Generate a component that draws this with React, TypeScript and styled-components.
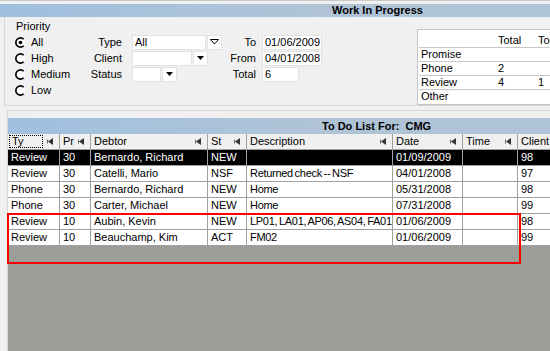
import styled, { createGlobalStyle } from "styled-components";

const GlobalStyle = createGlobalStyle`
  html, body {
    margin: 0;
    padding: 0;
    background: #f0f0f0;
    overflow: hidden;
  }
  body {
    font-family: "Liberation Sans", Arial, sans-serif;
    font-size: 11px;
    color: #000;
  }
`;

const Screen = styled.div`
  position: relative;
  width: 550px;
  height: 351px;
  overflow: hidden;
  display: flex;
  flex-direction: column;
  box-sizing: border-box;
  border-top: 1px solid #c8c8c8;
  padding-top: 3px;
`;

const TitleBar = styled.div<{ $height: number; $indent: number }>`
  flex-shrink: 0;
  height: ${(p) => p.$height}px;
  line-height: ${(p) => p.$height}px;
  padding-left: ${(p) => p.$indent}px;
  background: linear-gradient(90deg, #9ebfdf 0%, #a8c2dc 26%, #b0c3d6 60%, #aec3d8 100%);
  font-weight: bold;
  white-space: pre;
`;

/* ---------- filter panel ---------- */

const FilterPanel = styled.div`
  flex-shrink: 0;
  display: flex;
  align-items: flex-start;
  height: 89px;
  box-sizing: border-box;
  margin-left: 4px;
  padding-top: 3px;
  border-left: 1px solid #d6d6d6;
  border-bottom: 1px solid #d6d6d6;
`;

const PriorityGroup = styled.div`
  width: 80px;
  flex-shrink: 0;
  box-sizing: border-box;
  padding-left: 10px;
`;

const GroupLabel = styled.div`
  height: 14px;
  line-height: 13px;
  padding-left: 1px;
`;

const RadioRow = styled.div`
  display: flex;
  align-items: center;
  gap: 5px;
  height: 16px;
`;

const FieldsGroup = styled.div<{ $labelWidth: number; $fieldWidth: number; $gap: number }>`
  flex-shrink: 0;
  display: grid;
  grid-template-columns: ${(p) => p.$labelWidth}px ${(p) => p.$fieldWidth}px;
  grid-auto-rows: 16px;
  column-gap: ${(p) => p.$gap}px;
  align-items: center;
  margin-top: 14px;
`;

const FieldLabel = styled.div`
  text-align: right;
  line-height: 15px;
`;

const Combo = styled.div`
  display: flex;
  gap: 1px;
  height: 15px;
`;

const InputBox = styled.div<{ $width: number }>`
  width: ${(p) => p.$width}px;
  height: 15px;
  box-sizing: border-box;
  background: #fff;
  border: 1px solid #e2e2e2;
  padding-left: 2px;
  line-height: 13px;
  white-space: nowrap;
  overflow: hidden;
`;

const ComboButton = styled.div`
  width: 15px;
  height: 15px;
  box-sizing: border-box;
  background: #fff;
  border: 1px solid #e2e2e2;
  display: flex;
  align-items: center;
  justify-content: center;
`;

const DatesGroup = styled(FieldsGroup)`
  margin-left: 8px;
`;

const Summary = styled.div`
  flex-shrink: 0;
  width: 160px;
  margin-left: 95px;
  margin-top: 9px;
  padding: 1px;
  background: #fff;
  border: 1px solid #c4c4c4;
`;

const SummaryRow = styled.div<{ $head?: boolean }>`
  display: grid;
  grid-template-columns: 77px 40px 60px;
  height: ${(p) => (p.$head ? 16 : 14)}px;
  line-height: 13px;
  box-sizing: border-box;
  border-top: ${(p) => (p.$head ? "none" : "1px solid #c8c8c8")};
  padding-top: ${(p) => (p.$head ? 3 : 0)}px;

  & > span {
    padding-left: 2px;
    white-space: nowrap;
  }
`;

/* ---------- to do list ---------- */

const ListWindow = styled.div`
  flex: 1;
  display: flex;
  flex-direction: column;
  margin-top: 4px;
  margin-left: 7px;
  padding-top: 7px;
  border-left: 1px solid #d8d8d8;
  border-top: 1px solid #d8d8d8;
`;

const COLS = "52px 31px 117px 39px 146px 70px 55px 60px";

const GridRow = styled.div<{ $selected?: boolean }>`
  flex-shrink: 0;
  display: grid;
  grid-template-columns: ${COLS};
  height: 16px;
  background: ${(p) => (p.$selected ? "#000" : "#fff")};
  color: ${(p) => (p.$selected ? "#fff" : "#000")};
`;

const Cell = styled.div<{ $tight?: boolean }>`
  box-sizing: border-box;
  border-right: 1px solid #a0a0a0;
  border-bottom: 1px solid #a0a0a0;
  padding-left: 3px;
  line-height: 15px;
  white-space: nowrap;
  overflow: hidden;
  letter-spacing: ${(p) => (p.$tight ? "-0.3px" : "normal")};
  word-spacing: ${(p) => (p.$tight ? "-1px" : "normal")};
`;

const HeaderCell = styled(Cell)<{ $first?: boolean }>`
  display: flex;
  align-items: center;
  justify-content: space-between;
  padding-left: ${(p) => (p.$first ? 1 : 3)}px;
  padding-right: 6px;
  background: #f0f0f0;
`;

const FocusLabel = styled.span`
  width: 34px;
  height: 13px;
  box-sizing: border-box;
  border: 1px dotted #000;
  padding-left: 2px;
  line-height: 11px;
`;

const GrayFill = styled.div`
  flex: 1;
  background: #9c9e9a;
`;

const Highlight = styled.div`
  position: absolute;
  left: 7px;
  top: 212px;
  width: 514px;
  height: 51px;
  box-sizing: border-box;
  border: 2px solid #ff0000;
  pointer-events: none;
`;

/* ---------- drawings ---------- */

function Radio({ checked }: { checked?: boolean }) {
  return (
    <svg width="11" height="11" viewBox="0 0 12 12">
      <circle cx="6" cy="6" r="5" fill="#fff" />
      <path d="M9.5 2.5 A5 5 0 1 0 9.5 9.5" fill="none" stroke="#000" strokeWidth="1.8" />
      {checked && <circle cx="6" cy="6" r="2" fill="#000" />}
    </svg>
  );
}

function DropArrow({ hollow }: { hollow?: boolean }) {
  return hollow ? (
    <svg width="9" height="6" viewBox="0 0 9 6">
      <polygon points="0.5,0.5 8.5,0.5 4.5,5" fill="none" stroke="#000" strokeWidth="1" />
    </svg>
  ) : (
    <svg width="7" height="4" viewBox="0 0 7 4">
      <polygon points="0,0 7,0 3.5,4" fill="#000" />
    </svg>
  );
}

function SortArrow() {
  return (
    <svg width="6" height="7" viewBox="0 0 6 7">
      <polygon points="6,0 6,7 1,3.5" fill="#333" />
      <line x1="0.5" y1="1.5" x2="0.5" y2="5.5" stroke="#666" />
    </svg>
  );
}

/* ---------- data ---------- */

const priorities = [
  { label: "All", checked: true },
  { label: "High" },
  { label: "Medium" },
  { label: "Low" },
];

const summary = [
  ["Promise", "", ""],
  ["Phone", "2", ""],
  ["Review", "4", "1"],
  ["Other", "", ""],
];

const headers = ["Pr", "Debtor", "St", "Description", "Date", "Time", "Client"];

const tasks = [
  ["Review", "30", "Bernardo, Richard", "NEW", "", "01/09/2009", "", "98"],
  ["Review", "30", "Catelli, Mario", "NSF", "Returned check -- NSF", "04/01/2008", "", "97"],
  ["Phone", "30", "Bernardo, Richard", "NEW", "Home", "05/31/2008", "", "98"],
  ["Phone", "30", "Carter, Michael", "NEW", "Home", "07/31/2008", "", "99"],
  ["Review", "10", "Aubin, Kevin", "NEW", "LP01, LA01, AP06, AS04, FA01", "01/06/2009", "", "98"],
  ["Review", "10", "Beauchamp, Kim", "ACT", "FM02", "01/06/2009", "", "99"],
];

const DESCRIPTION = 4;

export default function App() {
  return (
    <>
      <GlobalStyle />
      <Screen>
        <TitleBar $height={13} $indent={332}>Work In Progress</TitleBar>

        <FilterPanel>
          <PriorityGroup>
            <GroupLabel>Priority</GroupLabel>
            {priorities.map((p) => (
              <RadioRow key={p.label}>
                <Radio checked={p.checked} />
                {p.label}
              </RadioRow>
            ))}
          </PriorityGroup>

          <FieldsGroup $labelWidth={37} $fieldWidth={90} $gap={10}>
            <FieldLabel>Type</FieldLabel>
            <Combo>
              <InputBox $width={75}>All</InputBox>
              <ComboButton>
                <DropArrow hollow />
              </ComboButton>
            </Combo>
            <FieldLabel>Client</FieldLabel>
            <Combo>
              <InputBox $width={60} />
              <ComboButton>
                <DropArrow />
              </ComboButton>
            </Combo>
            <FieldLabel>Status</FieldLabel>
            <Combo>
              <InputBox $width={29} />
              <ComboButton>
                <DropArrow />
              </ComboButton>
            </Combo>
          </FieldsGroup>

          <DatesGroup $labelWidth={26} $fieldWidth={60} $gap={6}>
            <FieldLabel>To</FieldLabel>
            <InputBox $width={60}>01/06/2009</InputBox>
            <FieldLabel>From</FieldLabel>
            <InputBox $width={60}>04/01/2008</InputBox>
            <FieldLabel>Total</FieldLabel>
            <InputBox $width={37}>6</InputBox>
          </DatesGroup>

          <Summary>
            <SummaryRow $head>
              <span />
              <span>Total</span>
              <span>Today</span>
            </SummaryRow>
            {summary.map((r) => (
              <SummaryRow key={r[0]}>
                {r.map((v, i) => (
                  <span key={i}>{v}</span>
                ))}
              </SummaryRow>
            ))}
          </Summary>
        </FilterPanel>

        <ListWindow>
          <TitleBar $height={16} $indent={314}>To Do List For:  CMG</TitleBar>
          <GridRow>
            <HeaderCell $first>
              <FocusLabel>Ty</FocusLabel>
              <SortArrow />
            </HeaderCell>
            {headers.map((h) => (
              <HeaderCell key={h}>
                {h}
                <SortArrow />
              </HeaderCell>
            ))}
          </GridRow>
          {tasks.map((t, i) => (
            <GridRow key={i} $selected={i === 0}>
              {t.map((v, j) => (
                <Cell key={j} $tight={j === DESCRIPTION}>
                  {v}
                </Cell>
              ))}
            </GridRow>
          ))}
          <GrayFill />
        </ListWindow>

        <Highlight />
      </Screen>
    </>
  );
}
